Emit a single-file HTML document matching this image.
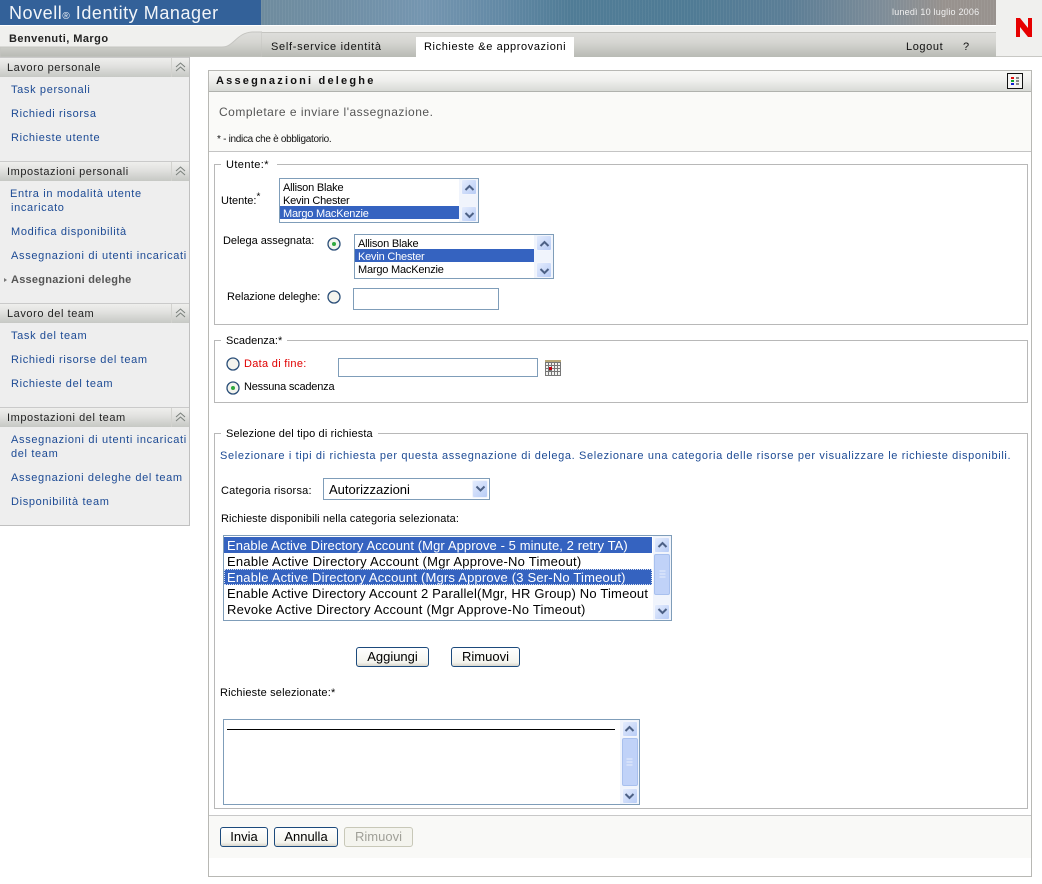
<!DOCTYPE html>
<html lang="it"><head><meta charset="utf-8"><title>Assegnazioni deleghe</title>
<style>
html,body{margin:0;padding:0;background:#fff}
#p{position:relative;width:1042px;height:884px;overflow:hidden;background:#fff;font-family:"Liberation Sans",sans-serif;font-size:11px;color:#000}
#p div,#p span.a,#p svg{position:absolute}
.t{white-space:nowrap;line-height:14px}
.l{color:#1c4a94;letter-spacing:.65px;left:11px}
.sh{left:0;width:189px;height:20px;background:linear-gradient(#efefed,#e2e2e0 40%,#c6c8c4);border-top:1px solid #cacaca;box-sizing:border-box}
.sht{left:7px;color:#222;letter-spacing:.56px}
.fs{border:1px solid #b8b8b8;box-sizing:border-box}
.lg{background:#fff;padding:0 5px;white-space:nowrap;line-height:14px}
.box{border:1px solid #7f9db9;background:#fff;box-sizing:border-box}
.sel{background:#3563c0;color:#fff}
.it{white-space:nowrap;left:3px;line-height:17px;height:13px;letter-spacing:-.2px}
.sel.it{left:0;width:176px;padding-left:3px}
.it2{white-space:nowrap;left:3px;font-size:13px;line-height:18px;height:16px;letter-spacing:.13px}
.sel.it2{left:0;width:425px;padding-left:3px}
.btn{border:1px solid #1c4a7c;border-radius:3px;background:linear-gradient(#fff,#f4f4ee 80%,#d8d6cc);box-sizing:border-box;text-align:center;font-size:13px;line-height:18px;color:#000}
.sb{background:#f0f4fc}
.ar{width:16px;background:linear-gradient(135deg,#e4ecfd,#b8ccf6);border:1px solid #f2f5fc;box-sizing:border-box;border-radius:2px}
.thumb{width:16px;background:#c0d2f8;border:1px solid #a8c0ee;box-sizing:border-box;border-radius:2px}
</style></head><body><div id="p">

<!-- header -->
<div style="left:0;top:0;width:261px;height:25px;background:#336199"></div>
<div class="t" style="left:9px;top:3px;font-size:18px;line-height:20px;color:#f2f5f9;letter-spacing:.55px">Novell<span style="font-size:10px">®</span> Identity Manager</div>
<div style="left:261px;top:0;width:735px;height:25px;background:linear-gradient(90deg,#6f8c9e 0,#6f8ea4 10%,#7596b0 22%,#648aa6 32%,#507c96 42%,#4f7b95 58%,#5c7e96 72%,#7f8d98 85%,#98928e 93%,#98928e 100%)"></div>
<div style="left:261px;top:0;width:735px;height:25px;background:repeating-linear-gradient(90deg,rgba(255,255,255,.05) 0 1px,transparent 1px 3px)"></div>
<div class="t" style="left:892px;top:5px;font-size:9px;color:#f0f0f0;letter-spacing:.2px">lunedì 10 luglio 2006</div>
<div style="left:0;top:25px;width:996px;height:1px;background:#fff"></div>
<div style="left:0;top:26px;width:996px;height:31px;background:#f0f0ee"></div>
<div style="left:262px;top:32px;width:734px;height:25px;background:linear-gradient(#dededc,#d6d6d2 40%,#b8bab4)"></div>
<div style="left:262px;top:32px;width:734px;height:1px;background:#c4c4c0"></div>
<svg style="left:0;top:26px" width="262" height="31" viewBox="0 0 262 31"><defs><linearGradient id="g" gradientUnits="userSpaceOnUse" x1="0" y1="6" x2="0" y2="31"><stop offset="0" stop-color="#dededc"/><stop offset=".4" stop-color="#d6d6d2"/><stop offset="1" stop-color="#b8bab4"/></linearGradient></defs><path d="M0 21H222C234 21 236 7 252 6H262V31H0Z" fill="url(#g)" stroke="#c4c4c0"/></svg>
<div class="t" style="left:9px;top:32px;font-weight:bold;color:#222;letter-spacing:.45px">Benvenuti, Margo</div>
<div class="t" style="left:271px;top:40px;letter-spacing:.7px;color:#111">Self-service identità</div>
<div style="left:416px;top:37px;width:158px;height:20px;background:#fff"></div>
<div class="t" style="left:424px;top:40px;letter-spacing:.6px;color:#000">Richieste &amp;e approvazioni</div>
<div class="t" style="left:906px;top:40px;letter-spacing:.6px;color:#111">Logout</div>
<div class="t" style="left:963px;top:40px;color:#111">?</div>
<div style="left:996px;top:0;width:46px;height:56px;background:#f0f0ee"></div>
<div style="left:996px;top:56px;width:46px;height:1px;background:#c8c8c4"></div>
<svg style="left:1016px;top:18px" width="16" height="19" viewBox="0 0 16 19"><path d="M0 19V0H4L12 10V0H16V19H12L4 9V19Z" fill="#e60000"/></svg>

<!-- sidebar -->
<div style="left:0;top:57px;width:190px;height:469px;background:#eeeeee;border-right:1px solid #c0c0c0;border-bottom:1px solid #c0c0c0;box-sizing:border-box"></div>

<div class="sh" style="top:57px"></div><div class="t sht" style="top:61px">Lavoro personale</div>
<div class="l t" style="top:83px">Task personali</div>
<div class="l t" style="top:107px">Richiedi risorsa</div>
<div class="l t" style="top:131px">Richieste utente</div>

<div class="sh" style="top:161px"></div><div class="t sht" style="top:165px">Impostazioni personali</div>
<div class="l t" style="top:187px;left:10px">Entra in modalità utente</div>
<div class="l t" style="top:201px;left:11px">incaricato</div>
<div class="l t" style="top:225px">Modifica disponibilità</div>
<div class="l t" style="top:249px;letter-spacing:.68px">Assegnazioni di utenti incaricati</div>
<div class="t" style="top:273px;left:11px;font-weight:bold;color:#555;letter-spacing:.25px">Assegnazioni deleghe</div>
<div style="left:4px;top:278px;width:0;height:0;border-left:3px solid #777;border-top:2px solid transparent;border-bottom:2px solid transparent"></div>

<div class="sh" style="top:303px"></div><div class="t sht" style="top:307px">Lavoro del team</div>
<div class="l t" style="top:329px">Task del team</div>
<div class="l t" style="top:353px">Richiedi risorse del team</div>
<div class="l t" style="top:377px">Richieste del team</div>

<div class="sh" style="top:407px"></div><div class="t sht" style="top:411px">Impostazioni del team</div>
<div class="l t" style="top:433px;letter-spacing:.68px">Assegnazioni di utenti incaricati</div>
<div class="l t" style="top:447px">del team</div>
<div class="l t" style="top:471px">Assegnazioni deleghe del team</div>
<div class="l t" style="top:495px">Disponibilità team</div>

<!-- section chevrons -->
<svg style="left:171px;top:57px" width="18" height="470" viewBox="0 0 18 470" fill="none" stroke="#7a807c" stroke-width="1">
<g><path d="M0.500 1V20" stroke="#d2d2ce"/><path d="M5 10L9.500 6L14 10M5 14L9.500 10L14 14"/></g>
<g transform="translate(0,104)"><path d="M0.500 1V20" stroke="#d2d2ce"/><path d="M5 10L9.500 6L14 10M5 14L9.500 10L14 14"/></g>
<g transform="translate(0,246)"><path d="M0.500 1V20" stroke="#d2d2ce"/><path d="M5 10L9.500 6L14 10M5 14L9.500 10L14 14"/></g>
<g transform="translate(0,350)"><path d="M0.500 1V20" stroke="#d2d2ce"/><path d="M5 10L9.500 6L14 10M5 14L9.500 10L14 14"/></g>
</svg>

<!-- main panel -->
<div style="left:208px;top:70px;width:824px;height:807px;border:1px solid #b8b8b4;box-sizing:border-box;background:#fff"></div>
<div style="left:209px;top:71px;width:822px;height:21px;background:linear-gradient(#f8f8f6,#f0f0ee 45%,#d8dad6);border-bottom:1px solid #b0b2ae;box-sizing:border-box"></div>
<div class="t" style="left:216px;top:74px;font-weight:bold;letter-spacing:2.2px;color:#111">Assegnazioni deleghe</div>
<div style="left:1007px;top:73px;width:16px;height:16px;border:1px solid #111;background:#f4f4f2;box-sizing:border-box"></div>
<svg style="left:1010px;top:76px" width="10" height="10" viewBox="0 0 10 10"><rect x="1" y="1" width="3" height="2" fill="#e01010"/><rect x="1" y="4" width="3" height="2" fill="#10a030"/><rect x="1" y="7" width="3" height="2" fill="#1020d0"/><rect x="6" y="1" width="3" height="2" fill="#888"/><rect x="6" y="4" width="3" height="2" fill="#888"/><rect x="6" y="7" width="3" height="2" fill="#888"/></svg>
<div style="left:209px;top:92px;width:822px;height:59px;background:#fafaf8"></div>
<div class="t" style="left:219px;top:105px;font-size:12px;color:#555;letter-spacing:.5px">Completare e inviare l'assegnazione.</div>
<div class="t" style="left:217px;top:133px;color:#111;font-size:10px;letter-spacing:-.3px">* - indica che è obbligatorio.</div>
<div style="left:209px;top:151px;width:822px;height:1px;background:#c4c4c4"></div>

<!-- fieldset 1 -->
<div class="fs" style="left:214px;top:164px;width:814px;height:161px"></div>
<div class="lg" style="left:221px;top:158px;letter-spacing:.4px;padding-right:8px">Utente:*</div>
<div class="t" style="left:221px;top:194px">Utente:<sup style="font-size:10px;line-height:0">*</sup></div>

<div class="box" style="left:279px;top:178px;width:200px;height:45px">
<div class="it" style="top:1px">Allison Blake</div>
<div class="it" style="top:14px">Kevin Chester</div>
<div class="it sel" style="top:27px">Margo MacKenzie</div>
<div class="sb" style="left:179px;top:0;width:19px;height:43px"></div>
<div class="ar" style="left:181px;top:0;height:16px"></div>
<div class="ar" style="left:181px;top:27px;height:16px"></div>
<svg style="left:184px;top:4px" width="11" height="36" viewBox="0 0 11 36" fill="none" stroke="#4d6185" stroke-width="2"><path d="M1.500 7L5.500 3L9.500 7M1.500 30L5.500 34L9.500 30"/></svg>
</div>

<div class="t" style="left:223px;top:234px;letter-spacing:-.03px">Delega assegnata:</div>
<svg style="left:327px;top:237px" width="14" height="14" viewBox="0 0 14 14"><circle cx="7" cy="7" r="6" fill="#f4f4ee" stroke="#2a4e78" stroke-width="1.300"/><circle cx="7" cy="7" r="2" fill="#2fa83e"/></svg>
<div class="box" style="left:354px;top:234px;width:200px;height:45px">
<div class="it" style="top:1px">Allison Blake</div>
<div class="it sel" style="top:14px">Kevin Chester</div>
<div class="it" style="top:27px">Margo MacKenzie</div>
<div class="sb" style="left:179px;top:0;width:19px;height:43px"></div>
<div class="ar" style="left:181px;top:0;height:16px"></div>
<div class="ar" style="left:181px;top:27px;height:16px"></div>
<svg style="left:184px;top:4px" width="11" height="36" viewBox="0 0 11 36" fill="none" stroke="#4d6185" stroke-width="2"><path d="M1.500 7L5.500 3L9.500 7M1.500 30L5.500 34L9.500 30"/></svg>
</div>

<div class="t" style="left:227px;top:290px;letter-spacing:-.05px">Relazione deleghe:</div>
<svg style="left:327px;top:290px" width="14" height="14" viewBox="0 0 14 14"><circle cx="7" cy="7" r="6" fill="#f4f4ee" stroke="#2a4e78" stroke-width="1.300"/></svg>
<div class="box" style="left:353px;top:288px;width:146px;height:22px"></div>

<!-- fieldset 2 -->
<div class="fs" style="left:214px;top:340px;width:814px;height:63px"></div>
<div class="lg" style="left:221px;top:334px">Scadenza:*</div>
<svg style="left:226px;top:357px" width="14" height="14" viewBox="0 0 14 14"><circle cx="7" cy="7" r="6" fill="#f4f4ee" stroke="#2a4e78" stroke-width="1.300"/></svg>
<div class="t" style="left:244px;top:357px;color:#e00000;letter-spacing:.3px">Data di fine:</div>
<div class="box" style="left:338px;top:358px;width:200px;height:19px"></div>
<svg style="left:545px;top:360px" width="16" height="16" viewBox="0 0 16 16"><rect width="16" height="16" fill="#777"/><rect x="0" y="0" width="16" height="2" fill="#b8a878"/><g fill="#f2f2f0"><rect x="1" y="3" width="2" height="2"/><rect x="4" y="3" width="2" height="2"/><rect x="7" y="3" width="2" height="2"/><rect x="10" y="3" width="2" height="2"/><rect x="13" y="3" width="2" height="2"/><rect x="1" y="6" width="2" height="2"/><rect x="4" y="6" width="2" height="2"/><rect x="7" y="6" width="2" height="2"/><rect x="10" y="6" width="2" height="2"/><rect x="13" y="6" width="2" height="2"/><rect x="1" y="9" width="2" height="2"/><rect x="7" y="9" width="2" height="2"/><rect x="10" y="9" width="2" height="2"/><rect x="13" y="9" width="2" height="2"/><rect x="1" y="12" width="2" height="3"/><rect x="4" y="12" width="2" height="3"/><rect x="7" y="12" width="2" height="3"/><rect x="10" y="12" width="2" height="3"/><rect x="13" y="12" width="2" height="3"/></g><rect x="4" y="7" width="3" height="3" fill="#c00010"/></svg>
<svg style="left:226px;top:381px" width="14" height="14" viewBox="0 0 14 14"><circle cx="7" cy="7" r="6" fill="#f4f4ee" stroke="#2a4e78" stroke-width="1.300"/><circle cx="7" cy="7" r="2" fill="#2fa83e"/></svg>
<div class="t" style="left:244px;top:380px;letter-spacing:-.2px">Nessuna scadenza</div>

<!-- fieldset 3 -->
<div class="fs" style="left:214px;top:433px;width:814px;height:376px"></div>
<div class="lg" style="left:221px;top:427px;letter-spacing:.14px">Selezione del tipo di richiesta</div>
<div class="t" style="left:220px;top:449px;color:#1c4a94;letter-spacing:.64px">Selezionare i tipi di richiesta per questa assegnazione di delega. Selezionare una categoria delle risorse per visualizzare le richieste disponibili.</div>
<div class="t" style="left:221px;top:484px;letter-spacing:.22px">Categoria risorsa:</div>
<div class="box" style="left:323px;top:478px;width:167px;height:22px"></div>
<div class="t" style="left:329px;top:482px;font-size:13px;line-height:15px">Autorizzazioni</div>
<div class="ar" style="left:472px;top:480px;height:18px"></div>
<svg style="left:475px;top:484px" width="11" height="10" viewBox="0 0 11 10" fill="none" stroke="#4d6185" stroke-width="2"><path d="M1.500 2.500L5.500 6.500L9.500 2.500"/></svg>
<div class="t" style="left:221px;top:512px;letter-spacing:.1px">Richieste disponibili nella categoria selezionata:</div>

<div class="box" style="left:223px;top:535px;width:449px;height:86px">
<div class="it2 sel" style="top:1px;letter-spacing:.09px">Enable Active Directory Account (Mgr Approve - 5 minute, 2 retry TA)</div>
<div class="it2" style="top:17px;letter-spacing:.24px">Enable Active Directory Account (Mgr Approve-No Timeout)</div>
<div class="it2 sel" style="top:33px;letter-spacing:.19px;outline:1px dotted #d8e0f0;outline-offset:-1px">Enable Active Directory Account (Mgrs Approve (3 Ser-No Timeout)</div>
<div class="it2" style="top:49px;letter-spacing:.19px">Enable Active Directory Account 2 Parallel(Mgr, HR Group) No Timeout</div>
<div class="it2" style="top:65px;letter-spacing:.25px">Revoke Active Directory Account (Mgr Approve-No Timeout)</div>
<div class="sb" style="left:429px;top:0;width:18px;height:84px"></div>
<div class="ar" style="left:430px;top:1px;height:16px"></div>
<div class="thumb" style="left:430px;top:18px;height:41px"></div>
<div class="ar" style="left:430px;top:68px;height:16px"></div>
<svg style="left:433px;top:4px" width="11" height="76" viewBox="0 0 11 76" fill="none" stroke="#4d6185" stroke-width="2"><path d="M1.500 7L5.500 3L9.500 7M1.500 69L5.500 73L9.500 69"/><path d="M2.500 31H8.500M2.500 34H8.500M2.500 37H8.500" stroke="#e8effd" stroke-width="1"/></svg>
</div>

<div class="btn" style="left:356px;top:647px;width:73px;height:20px">Aggiungi</div>
<div class="btn" style="left:451px;top:647px;width:69px;height:20px">Rimuovi</div>

<div class="t" style="left:220px;top:686px;letter-spacing:.18px">Richieste selezionate:*</div>
<div class="box" style="left:223px;top:719px;width:417px;height:86px">
<div style="left:3px;top:9px;width:388px;height:1px;background:#000"></div>
<div class="sb" style="left:396px;top:0;width:19px;height:84px"></div>
<div class="ar" style="left:398px;top:1px;height:16px"></div>
<div class="thumb" style="left:398px;top:18px;height:48px"></div>
<div class="ar" style="left:398px;top:68px;height:16px"></div>
<svg style="left:400px;top:4px" width="11" height="76" viewBox="0 0 11 76" fill="none" stroke="#4d6185" stroke-width="2"><path d="M1.500 7L5.500 3L9.500 7M1.500 70L5.500 74L9.500 70"/><path d="M2.500 35H8.500M2.500 38H8.500M2.500 41H8.500" stroke="#e8effd" stroke-width="1"/></svg>
</div>

<!-- footer -->
<div style="left:209px;top:815px;width:822px;height:43px;background:#f9f9f7;border-top:1px solid #c8c8c8;box-sizing:border-box"></div>
<div class="btn" style="left:220px;top:827px;width:48px;height:20px">Invia</div>
<div class="btn" style="left:274px;top:827px;width:64px;height:20px">Annulla</div>
<div class="btn" style="left:344px;top:827px;width:69px;height:20px;border-color:#c8c8b8;color:#a0a098;background:#f4f4ee">Rimuovi</div>

</div></body></html>
